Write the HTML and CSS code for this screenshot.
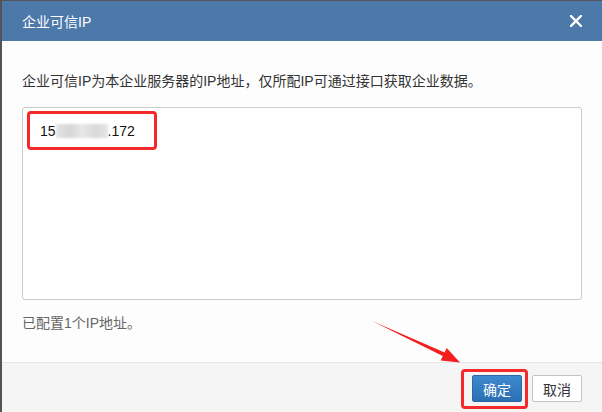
FILE: index.html
```html
<!DOCTYPE html>
<html>
<head>
    <title>企业可信IP</title>
    <link rel="stylesheet" href="styles.css">
</head>
<body>
    <div class="modal">
        <div class="modal-header">
            <span class="modal-title">企业可信IP</span>
            <svg class="close" width="12" height="12" viewBox="0 0 12 12">
                <path d="M1 1L11 11M11 1L1 11" stroke="#fff" stroke-width="2.4" stroke-linecap="square"/>
            </svg>
        </div>

        <div class="modal-body">
            <p class="intro">企业可信IP为本企业服务器的IP地址，仅所配IP可通过接口获取企业数据。</p>
            <div class="ip-box">
                <span class="ip-line">15<span class="masked"></span>.172</span>
            </div>
            <p class="count">已配置1个IP地址。</p>
        </div>

        <div class="modal-footer">
            <span class="marked"><button class="btn btn-primary">确定</button></span>
            <button class="btn">取消</button>
        </div>
    </div>

    <!-- red annotation arrow -->
    <svg class="arrow" width="602" height="412" viewBox="0 0 602 412">
        <polygon points="372,321 444.6,352.5 446.7,348 460,362.5 440.7,360.6 442.8,356.1" fill="#f41e1e"/>
    </svg>
</body>
</html>
```

FILE: styles.css
```css
html, body {
    margin: 0;
    height: 100%;
}
body {
    background: #545454;
    overflow: hidden;
    position: relative;
    font-family: "Liberation Sans", "Noto Sans CJK SC", sans-serif;
    font-size: 14px;
}
.modal {
    margin: 1px 0 0 2px;
    width: 600px;
    background: #fdfdfd;
}
.modal-header {
    height: 40px;
    background: #4c78aa;
    display: flex;
    align-items: center;
    justify-content: space-between;
    padding: 0 20px;
}
.modal-title {
    color: #fff;
    font-size: 14px;
}
.close {
    display: block;
}
.modal-body {
    padding: 30px 20px 29px;
}
.intro {
    margin: 0;
    line-height: 20px;
    color: #333;
}
.ip-box {
    margin-top: 16px;
    height: 185px;
    border: 1px solid #ccc;
    border-radius: 3px;
    background: #fff;
    padding: 3px 4px;
}
.ip-line {
    display: inline-flex;
    align-items: center;
    height: 33px;
    padding: 0 19px 0 10px;
    border: 3px solid #f42a2a;
    border-radius: 4px;
    color: #111;
    font-size: 14px;
}
.masked {
    display: inline-block;
    width: 52px;
    height: 14px;
    background: linear-gradient(90deg, #e4e4e4 0, #d6d6d6 14px, #e8e8e8 26px, #d9d9d9 40px, #e6e6e6 52px);
    filter: blur(1px);
}
.count {
    margin: 13px 0 0;
    line-height: 20px;
    color: #666;
}
.modal-footer {
    border-top: 1px solid #e3e3e3;
    background: #f5f5f5;
    height: 60px;
    padding: 12px 20px 0;
    display: flex;
    justify-content: flex-end;
    align-items: flex-start;
    gap: 10px;
}
.btn {
    width: 50px;
    height: 27px;
    border: 1px solid #c4c4c4;
    border-radius: 2px;
    background: #fff;
    color: #333;
    font-family: "Liberation Sans", "Noto Sans CJK SC", sans-serif;
    font-size: 14px;
    padding: 0;
}
.btn-primary {
    background: linear-gradient(#3d8ad0, #2c6fb3);
    border-color: #2a68a8;
    color: #fff;
}
.marked {
    position: relative;
    display: block;
}
.marked::after {
    content: "";
    position: absolute;
    left: -11px;
    right: -6px;
    top: -6px;
    bottom: -7px;
    border: 3px solid #f42a2a;
    border-radius: 4px;
}
.arrow {
    position: absolute;
    left: 0;
    top: 0;
    pointer-events: none;
}
```
